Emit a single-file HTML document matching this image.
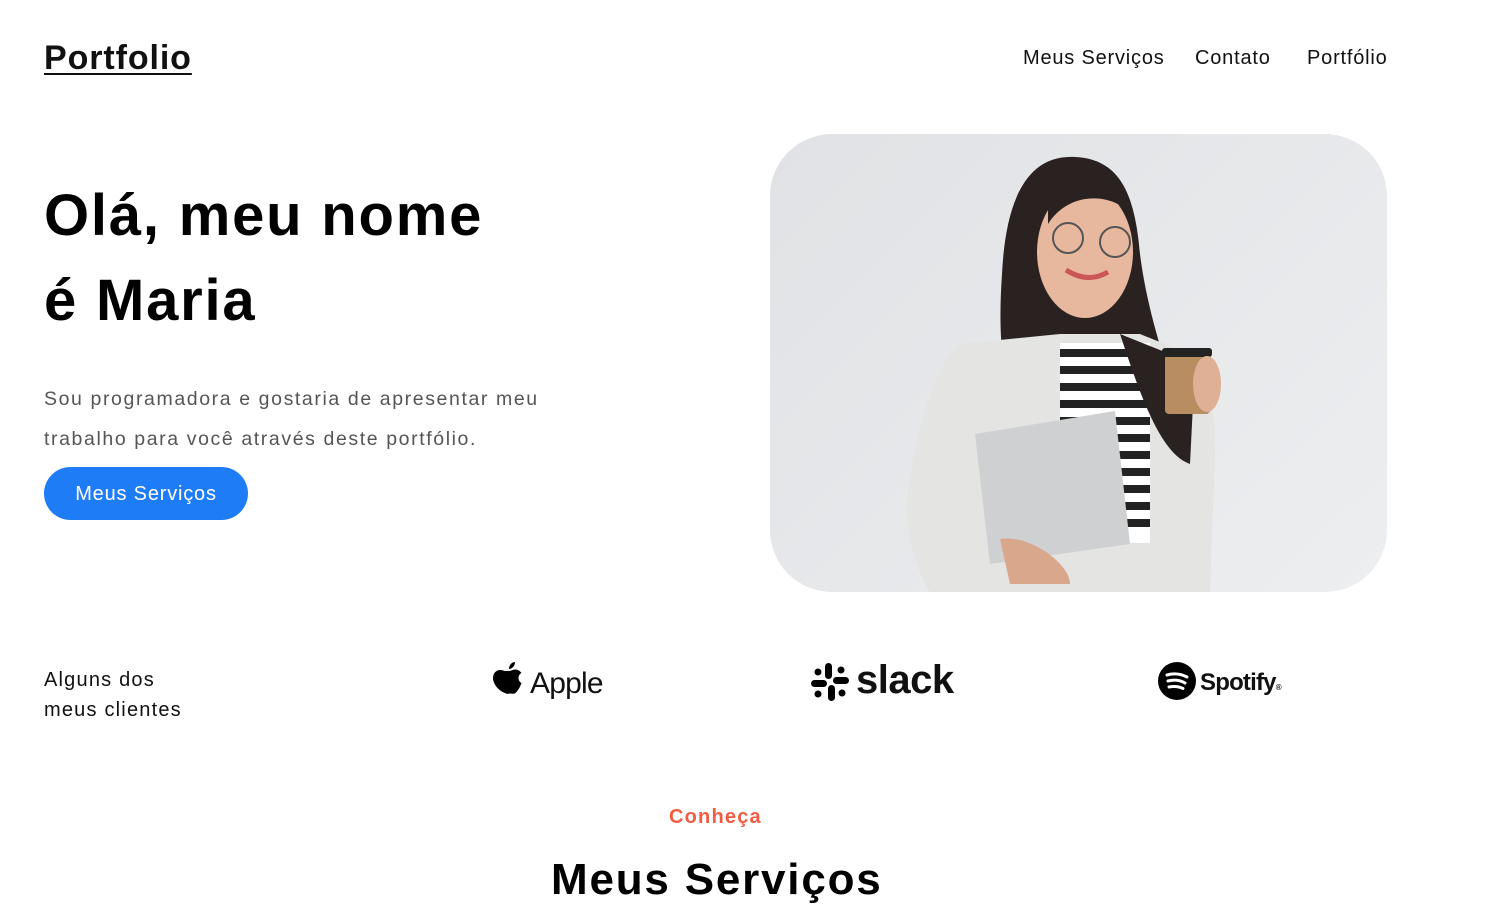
<!DOCTYPE html>
<html><head><meta charset="utf-8"><style>
*{margin:0;padding:0;box-sizing:border-box}
body{width:1507px;height:892px;overflow:hidden;background:#fff;font-family:"Liberation Sans",sans-serif;color:#111;position:relative}
.a{position:absolute;white-space:nowrap}
.logo{left:44px;top:39px;font-size:34px;font-weight:bold;text-decoration:underline;text-underline-offset:4px;text-decoration-thickness:2px;letter-spacing:0.9px}
.nav{top:47px;font-size:20px;color:#111;letter-spacing:0.8px}
h1{position:absolute;left:44px;top:173px;font-size:58px;line-height:85px;font-weight:bold;letter-spacing:1.8px;color:#000}
.p{left:44px;top:379px;font-size:19.5px;line-height:40px;color:#555;letter-spacing:1.6px}
.btn{left:44px;top:467px;width:204px;height:53px;border-radius:27px;background:#1f7cf7;color:#fff;font-size:20px;text-align:center;line-height:55px;letter-spacing:0.8px}
.img{position:absolute;left:770px;top:134px;width:617px;height:458px;border-radius:62px;overflow:hidden;background:linear-gradient(135deg,#e0e2e5,#eceef0)}
</style></head><body>
<div class="a logo">Portfolio</div>
<div class="a nav" style="left:1023px">Meus Serviços</div>
<div class="a nav" style="left:1195px">Contato</div>
<div class="a nav" style="left:1307px">Portfólio</div>
<h1>Olá, meu nome<br>é Maria</h1>
<div class="a p">Sou programadora e gostaria de apresentar meu<br>trabalho para você através deste portfólio.</div>
<div class="a btn">Meus Serviços</div>
<div class="img"><svg width="617" height="458" viewBox="0 0 617 458">
<path d="M305 23 C250 20 235 80 232 140 C228 200 230 260 260 300 L420 330 C410 260 380 200 370 120 C365 60 350 25 305 23Z" fill="#2a2220"/>
<ellipse cx="315" cy="118" rx="48" ry="66" fill="#e8b89e"/>
<path d="M278 60 C300 40 340 45 360 80 C345 60 300 55 278 90Z" fill="#2a2220"/>
<circle cx="298" cy="104" r="15" fill="none" stroke="#555" stroke-width="2"/><circle cx="345" cy="108" r="15" fill="none" stroke="#555" stroke-width="2"/>
<path d="M296 136 Q318 150 338 138" stroke="#c55" stroke-width="5" fill="none"/>
<path d="M190 210 C160 230 140 330 137 370 C135 420 160 458 160 458 L440 458 L445 320 C445 280 440 240 420 220 L370 200 L290 200Z" fill="#e4e4e2"/>
<rect x="290" y="209" width="90" height="200" fill="#fff"/>
<g fill="#222"><rect x="290" y="215" width="90" height="8"/><rect x="290" y="232" width="90" height="8"/><rect x="290" y="249" width="90" height="8"/><rect x="290" y="266" width="90" height="8"/><rect x="290" y="283" width="90" height="8"/><rect x="290" y="300" width="90" height="8"/><rect x="290" y="317" width="90" height="8"/><rect x="290" y="334" width="90" height="8"/><rect x="290" y="351" width="90" height="8"/><rect x="290" y="368" width="90" height="8"/><rect x="290" y="385" width="90" height="8"/></g>
<path d="M350 200 C370 260 390 320 420 330 L425 230 Z" fill="#2a2220"/>
<path d="M205 300 L345 277 L360 410 L220 430Z" fill="#cfd0d1"/>
<path d="M230 405 C260 400 300 430 300 450 L240 450Z" fill="#d9a88c"/>
<rect x="395" y="220" width="45" height="60" rx="4" fill="#b88d62"/>
<rect x="392" y="214" width="50" height="9" rx="3" fill="#222"/>
<ellipse cx="437" cy="250" rx="14" ry="28" fill="#e0b096"/>
</svg></div>
<div class="a" style="left:44px;top:665px;font-size:20px;line-height:30px;letter-spacing:1.2px">Alguns dos<br>meus clientes</div>
<svg class="a" style="left:493px;top:662px" width="32" height="38" viewBox="0 0 32 38"><path d="M22 0c0 4-3 7-6 7 0-4 3-7 6-7zM16 9c2 0 4-1.5 6-1.5 3 0 5 1.5 6.5 3.5-4 2-4 8 0 10-1 3-3 7-5.5 9.5-2 2-3.5 1-5.5 1s-3.5 1-5.5-0.5C4 28 0 21 0 16c0-5 3.5-8 7-8 2.5 0 4 1 5.5 1z" transform="translate(0,0)" fill="#000"/></svg>
<div class="a" style="left:530px;top:667px;font-size:30px;letter-spacing:-0.8px">Apple</div>
<svg class="a" style="left:811px;top:663px" width="38" height="38" viewBox="0 0 38 38" fill="#000"><rect x="14" y="0" width="7" height="16" rx="3.5"/><rect x="22" y="14" width="16" height="7" rx="3.5"/><rect x="17" y="22" width="7" height="16" rx="3.5"/><rect x="0" y="17" width="16" height="7" rx="3.5"/><circle cx="30" cy="7" r="3.5"/><circle cx="7" cy="31" r="3.5"/><circle cx="7" cy="9" r="3.5"/><circle cx="31" cy="30" r="3.5"/></svg>
<div class="a" style="left:856px;top:658px;font-size:40px;font-weight:bold;letter-spacing:-0.5px">slack</div>
<svg class="a" style="left:1158px;top:662px" width="38" height="38" viewBox="0 0 38 38"><circle cx="19" cy="19" r="19" fill="#000"/><path d="M9 13c7-2 14-1 20 2M10 19c6-1.5 12-1 17 2M11 25c5-1 10-.5 14 1.5" stroke="#fff" stroke-width="3" fill="none" stroke-linecap="round"/></svg>
<div class="a" style="left:1200px;top:669px;font-size:24px;font-weight:bold;letter-spacing:-0.8px">Spotify<span style="font-size:8px">®</span></div>
<div class="a" style="left:669px;top:806px;font-size:20px;font-weight:bold;color:#f25c45;letter-spacing:1.2px">Conheça</div>
<div class="a" style="left:551px;top:855px;font-size:44px;font-weight:bold;color:#000;letter-spacing:1.8px">Meus Serviços</div>
</body></html>
